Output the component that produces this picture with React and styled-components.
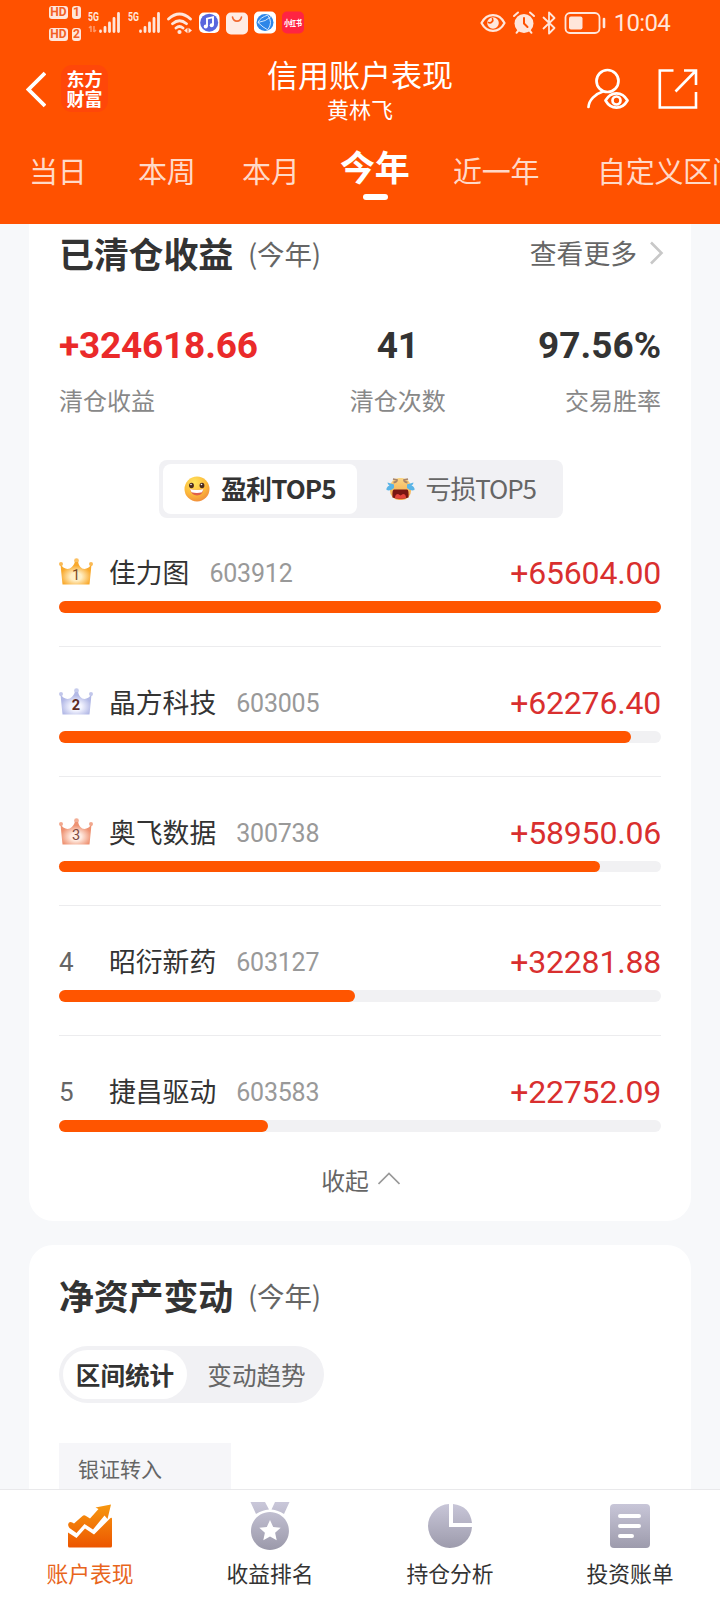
import React from 'react';
import styled, { createGlobalStyle } from 'styled-components';

const GlobalStyle = createGlobalStyle`
  * {
    box-sizing: border-box;
  }

  body {
    margin: 0;
    background: #f7f8fa;
    font-family: 'Noto Sans CJK SC', sans-serif;
    color: #333;
  }

  svg {
    display: block;
    flex: none;
  }
`;

const Screen = styled.div`
  display: flex;
  flex-direction: column;
  width: 720px;
  height: 1600px;
  overflow: hidden;
`;

const Header = styled.header`
  flex: none;
  height: 224px;
  background: #ff5100;
  color: #fff;
`;

const StatusBar = styled.div`
  display: flex;
  justify-content: space-between;
  height: 46px;
  padding: 0 50px 0 49px;
`;

const StatusGroup = styled.div`
  display: flex;
  align-items: center;
  gap: ${({ $gap }) => $gap}px;
`;

const HdList = styled.div`
  display: grid;
  gap: 9px;
  margin: 1px 2px 0 0;
`;

const HdRow = styled.div`
  display: flex;
  gap: 4px;
`;

const HdTag = styled.span`
  width: ${({ $width }) => $width}px;
  height: 13px;
  border-radius: 3px;
  background: #ffe6db;
  color: #f26024;
  font: bold 12px/13px Roboto, sans-serif;
  text-align: center;
`;

const Clock = styled.span`
  margin-left: 3px;
  font: 24px/46px Roboto, sans-serif;
  letter-spacing: -0.7px;
  color: #ffe6db;
`;

const TitleBar = styled.div`
  display: grid;
  grid-template-columns: 200px 1fr 200px;
  height: 86px;
`;

const TitleLeft = styled.div`
  display: flex;
  gap: 15px;
  padding: 19px 0 0 26px;
`;

const Logo = styled.div`
  display: grid;
  align-content: center;
  width: 47px;
  height: 47px;
  border-radius: 11px;
  background: #ff4709;
  font-size: 18px;
  font-weight: 700;
  line-height: 19.5px;
  text-align: center;
`;

const Heading = styled.div`
  text-align: center;
`;

const Title = styled.h1`
  margin: 6px 0 0;
  font-size: 31px;
  font-weight: 400;
  line-height: 44px;
`;

const Subtitle = styled.div`
  font-size: 22px;
  line-height: 24px;
`;

const TitleRight = styled.div`
  display: flex;
  justify-content: flex-end;
  gap: 29px;
  padding: 22px 22px 0 0;
`;

const Tabs = styled.nav`
  display: flex;
  height: 92px;
  padding: 11px 0 0 29px;
`;

const Tab = styled.div`
  flex: none;
  width: ${({ $width }) => $width}px;
  font-size: 29px;
  line-height: 55px;
  letter-spacing: -0.3px;
  white-space: nowrap;
  color: #ffd9c8;
`;

const ActiveTab = styled(Tab)`
  font-size: 35px;
  font-weight: 700;
  line-height: 46px;
  color: #fff;

  &::after {
    content: '';
    display: block;
    width: 25px;
    height: 6px;
    margin: 5px 0 0 23px;
    border-radius: 3px;
    background: #fff;
  }
`;

const Body = styled.main`
  flex: 1;
  min-height: 0;
  overflow: hidden;
  padding: 0 29px;
`;

const Card = styled.section`
  height: ${({ $height }) => $height}px;
  padding: 0 30px;
  background: #fff;
  border-radius: ${({ $radius }) => $radius};

  & + & {
    margin-top: 24px;
    padding-top: 21px;
  }
`;

const CardHeader = styled.div`
  display: flex;
  align-items: center;
  height: 57px;
`;

const CardTitle = styled.h2`
  margin: 0;
  font-size: 35px;
  font-weight: 700;
  line-height: 56px;
  letter-spacing: -0.2px;
`;

const Period = styled.span`
  margin-left: 15px;
  font-size: 27.5px;
  letter-spacing: -0.2px;
  line-height: 56px;
  color: #666;
`;

const More = styled.span`
  display: flex;
  align-items: center;
  gap: 12px;
  margin: 0 -3px 0 auto;
  font-size: 26.8px;
  line-height: 56px;
  color: #666;
`;

const Stats = styled.div`
  display: flex;
  justify-content: space-between;
  height: 179px;
  padding-top: 43px;
`;

const Stat = styled.div`
  text-align: ${({ $align }) => $align};
`;

const StatValue = styled.div`
  font: bold 37px/44px Roboto, sans-serif;
  letter-spacing: ${({ $spacing }) => $spacing || 0}px;
  color: ${({ $color }) => $color || '#333'};
`;

const StatLabel = styled.div`
  margin-top: 14px;
  font-size: 24px;
  line-height: 36px;
  color: #888;
`;

const Toggle = styled.div`
  display: flex;
  width: 404px;
  height: 58px;
  margin-left: 100px;
  padding: 4px;
  border-radius: 8px;
  background: #f1f1f4;
`;

const ToggleItem = styled.div`
  display: flex;
  align-items: center;
  gap: 11px;
  width: ${({ $width }) => $width}px;
  padding-left: ${({ $inset }) => $inset}px;
  border-radius: 8px;
  background: ${({ $active }) => ($active ? '#fff' : 'none')};
  color: ${({ $active }) => ($active ? '#333' : '#666')};
  font-size: 26px;
  font-weight: ${({ $active }) => ($active ? 700 : 400)};
  line-height: 46px;
  letter-spacing: ${({ $active }) => ($active ? -0.9 : -1.1)}px;
  white-space: nowrap;

  span {
    margin-top: -2px;
  }
`;

const Ranking = styled.ol`
  margin: 0;
  padding: 0;
  list-style: none;
`;

const RankItem = styled.li`
  height: 129.7px;
  padding-top: 35px;
  border-bottom: 1px solid #ececee;

  &:first-child {
    height: 129.1px;
    padding-top: 34px;
  }

  &:last-child {
    border-bottom: 0;
  }
`;

const RankRow = styled.div`
  display: flex;
  align-items: center;
  height: 42px;
`;

const RankBadge = styled.div`
  width: 50px;
  color: #666;
  font: 26px/42px Roboto, sans-serif;
`;

const StockName = styled.span`
  font-size: 26.8px;
  line-height: 42px;
  margin-top: -2px;
`;

const StockCode = styled.span`
  margin: 2px 0 0 20px;
  font: 25px/42px Roboto, sans-serif;
  letter-spacing: -0.2px;
  color: #999;
`;

const Amount = styled.span`
  margin-left: auto;
  font: 32px/42px Roboto, sans-serif;
  letter-spacing: -0.2px;
  color: #d92f2f;
`;

const Track = styled.div`
  height: 11.5px;
  margin-top: 7px;
  border-radius: 6px;
  background: #f1f1f3;
`;

const Fill = styled.div`
  height: 100%;
  border-radius: 6px;
  background: #ff5500;
`;

const Collapse = styled.div`
  display: flex;
  justify-content: center;
  gap: 9px;
  margin-top: -4px;
  padding-left: 1px;
  font-size: 23.8px;
  line-height: 36px;
  color: #666;

  svg {
    margin-top: 10px;
  }
`;

const Segments = styled.div`
  display: flex;
  width: 265px;
  height: 57px;
  margin-top: 23px;
  padding: 4px;
  border-radius: 29px;
  background: #f1f1f4;
`;

const Segment = styled.div`
  flex: none;
  width: ${({ $width }) => $width}px;
  border-radius: 25px;
  background: ${({ $active }) => ($active ? '#fff' : 'none')};
  color: ${({ $active }) => ($active ? '#333' : '#666')};
  font-size: 24.6px;
  font-weight: ${({ $active }) => ($active ? 700 : 400)};
  line-height: 48px;
  text-align: center;
`;

const TableHead = styled.div`
  width: 172px;
  height: 60px;
  margin-top: 40px;
  padding-left: 19px;
  background: #f6f6f9;
  color: #666;
  font-size: 21px;
  line-height: 50px;
`;

const BottomNav = styled.nav`
  flex: none;
  display: flex;
  height: 111px;
  border-top: 1px solid #e9e9eb;
  background: #fff;
`;

const NavItem = styled.div`
  display: flex;
  flex-direction: column;
  align-items: center;
  width: 180px;
  padding-top: 11px;
  color: ${({ $active }) => ($active ? '#e8651c' : '#333')};
  font-size: 21.8px;
  line-height: 32px;

  svg {
    margin-bottom: 6px;
  }
`;

const pale = '#ffe6db';

function Signal({ data }) {
  return (
    <svg width="34" height="24" viewBox="0 0 34 24">
      <text x="0" y="10" fontFamily="Roboto" fontSize="12" fontWeight="700" textLength="11" lengthAdjust="spacingAndGlyphs" fill={pale}>5G</text>
      {data && (
        <path d="M3 15v6M1 17l2-2M6 15v6M6 21l2-2" stroke="#ff9a6c" strokeWidth="1.5" fill="none" />
      )}
      <path d="M12.500 20v.5M17 16.500v4M21.500 12v8.500M26 7.500v13M30.500 2.500v18" stroke={pale} strokeWidth="2.8" strokeLinecap="round" />
    </svg>
  );
}

function Wifi() {
  return (
    <svg width="26" height="24" viewBox="0 0 26 24" fill="none" stroke={pale} strokeWidth="2.8" strokeLinecap="round">
      <path d="M1.500 8Q12.500 -2 23.500 8M5.500 12.700q7-6 14 0M9 17q3.500-3 7 0" />
      <circle cx="12.500" cy="21" r="1.300" fill={pale} stroke="none" />
      <circle cx="12.500" cy="21" r="0.700" />
      <path d="M17 19.500l3.500-2.800v5.600zM21.500 16.700l3.500 2.800-3.500 2.800z" fill={pale} stroke="none" />
    </svg>
  );
}

function AppBadges() {
  return (
    <svg width="107" height="24" viewBox="0 0 107 24">
      <rect x="0" y="1.500" width="20.500" height="20.500" rx="5" fill="#fff" />
      <circle cx="10.200" cy="11.700" r="9" fill="#5966dd" />
      <path d="M8 15.500V7.700l6-1.500V14" fill="none" stroke="#fff" strokeWidth="1.900" />
      <circle cx="6.700" cy="15.500" r="2" fill="#fff" />
      <circle cx="12.700" cy="14.300" r="2" fill="#fff" />
      <rect x="27" y="1.500" width="22" height="22" rx="5" fill="#ffece4" />
      <path d="M33.500 6c1 5.500 8 5.500 9 0" fill="none" stroke="#f26a32" strokeWidth="1.600" strokeLinecap="round" />
      <rect x="55" y="0.500" width="22" height="22" rx="5" fill="#fff" />
      <circle cx="66" cy="11.500" r="8.500" fill="#2d86e8" />
      <path d="M69 4Q61 6.500 59 11.500q5 5 10 7.500M59 11.500q8-1 13-6M69 4.500q5 7 0 14" fill="none" stroke="#cfe6ff" strokeWidth="1" />
      <rect x="83" y="0.500" width="22" height="22" rx="5" fill="#ff2442" />
      <text x="94" y="14.500" textAnchor="middle" fontFamily="Noto Sans CJK SC" fontWeight="900" fontSize="7.500" fill="#fff" textLength="18" lengthAdjust="spacingAndGlyphs">小红书</text>
    </svg>
  );
}

function SystemIcons() {
  return (
    <svg width="126" height="24" viewBox="0 0 126 24" fill="none" stroke={pale} strokeLinecap="round" strokeLinejoin="round">
      <path d="M1.500 12C7 1.500 19 1.500 24.500 12C19 22.500 7 22.500 1.500 12z" strokeWidth="2.200" />
      <circle cx="13" cy="12" r="5.800" fill={pale} stroke="none" />
      <path d="M12.500 7.500a3 3 0 0 1 -4 4" stroke="#ff5100" strokeWidth="1.600" />
      <circle cx="44" cy="12.500" r="9.500" fill={pale} stroke="none" />
      <path d="M34 5l4-3.500M54 5l-4-3.500M38 20l-1.500 1.800M50 20l1.500 1.800" strokeWidth="2" />
      <path d="M44 7v5.500l3.500 3.500" stroke="#ff5100" strokeWidth="2" />
      <path d="M63.500 6.500l11 10.500-5.500 5.500V1.500l5.500 5.500-11 10.500" strokeWidth="1.800" />
      <rect x="85.500" y="2" width="34" height="20" rx="4.500" strokeWidth="1.800" />
      <rect x="89" y="5.500" width="13.500" height="13" rx="2" fill={pale} stroke="none" />
      <path d="M124 8v8" strokeWidth="2.600" />
    </svg>
  );
}

function UserEye() {
  return (
    <svg width="42" height="42" viewBox="0 0 42 42" fill="none" stroke="#fff" strokeWidth="2.700" strokeLinecap="round">
      <circle cx="20.500" cy="13" r="11" />
      <path d="M16 23.500C8 26 2 32 1.500 39" />
      <path d="M18.500 32.500C24 23 35 23 40.500 32.500C35 42 24 42 18.500 32.500z" strokeLinejoin="round" />
      <circle cx="29.500" cy="32.500" r="4" />
    </svg>
  );
}

function Share() {
  return (
    <svg width="40" height="42" viewBox="0 0 40 42" fill="none" stroke="#fff" strokeWidth="2.600">
      <path d="M15.500 2.500H1.800v37H38V24" />
      <path d="M26 2.500h12V17M38 2.500L17.500 23.500" />
    </svg>
  );
}

function Smile() {
  return (
    <svg width="26" height="26" viewBox="0 0 26 26">
      <defs>
        <radialGradient id="smile" cx="0.4" cy="0.25" r="0.8">
          <stop offset="0" stopColor="#ffe65e" />
          <stop offset="0.6" stopColor="#fcb93a" />
          <stop offset="1" stopColor="#f08a3c" />
        </radialGradient>
      </defs>
      <circle cx="13" cy="13" r="12.500" fill="url(#smile)" />
      <ellipse cx="7.500" cy="9.500" rx="2.400" ry="2.800" fill="#4a2a1c" />
      <ellipse cx="18" cy="9.500" rx="2.400" ry="2.800" fill="#4a2a1c" />
      <circle cx="7" cy="8.500" r="0.800" fill="#fff" />
      <circle cx="17.500" cy="8.500" r="0.800" fill="#fff" />
      <path d="M6 13q7 2 13.500 0q-1 6.500-6.500 6.500t-7-6.500z" fill="#e0604a" />
      <path d="M6 13q7 2 13.500 0l-1.500 3.200q-5 1.500-10.500 0z" fill="#fff" />
    </svg>
  );
}

function Cry() {
  return (
    <svg width="29" height="24" viewBox="0 0 29 24">
      <defs>
        <linearGradient id="cry" x2="0" y2="1">
          <stop offset="0" stopColor="#fbd583" />
          <stop offset="1" stopColor="#f5a644" />
        </linearGradient>
      </defs>
      <rect x="4" y="1" width="21" height="22" rx="9" fill="url(#cry)" />
      <path d="M7 2l4 1q0 2-3.500 2.500M22 2l-4 1q0 2 3.500 2.500" fill="none" stroke="#a98468" strokeWidth="1.800" />
      <path d="M8 7.500L1.500 5.500q0 2 2 3Q0 10 0.500 13q4 1.500 7.500-2zM21 7.500l6.500-2q0 2-2 3 3.500 1.500 3 4.500-4 1.500-7.500-2z" fill="#5ab4e6" />
      <path d="M6.500 20.500q-.500-8 1.500-8h13q2 0 1.500 8-8 2.500-16 0z" fill="#7a1712" />
      <path d="M9 21q0-4 3-4l2.500 1.500 2.500-1.500q3 0 3 4-5.500 1.500-11 0z" fill="#e4453b" />
    </svg>
  );
}

function Crown({ rank, edge, middle, digit }) {
  const id = `crown${rank}`;
  return (
    <svg width="34" height="30" viewBox="0 0 34 30">
      <defs>
        <radialGradient id={id} cx="0.5" cy="0.65" r="0.5">
          <stop offset="0" stopColor={middle} />
          <stop offset="0.35" stopColor={middle} />
          <stop offset="1" stopColor={edge} />
        </radialGradient>
      </defs>
      <path d="M1.500 6.500Q4.500 10.500 8.500 11Q13.500 10.500 16 4h3Q20.500 10.500 25.500 11Q29.500 10.500 32.500 6.500L30.500 26.500h-27z" fill={`url(#${id})`} />
      <circle cx="2" cy="6" r="2" fill={edge} fillOpacity="0.800" />
      <circle cx="17.500" cy="2.700" r="2.400" fill={edge} fillOpacity="0.750" />
      <circle cx="32" cy="6" r="2" fill={edge} fillOpacity="0.800" />
      <text x="17" y="21.500" textAnchor="middle" fontFamily="Roboto" fontSize="14.500" fontWeight={rank === 2 ? 700 : 400} fill={digit}>{rank}</text>
    </svg>
  );
}

function NavIcon({ name }) {
  return (
    <svg width="48" height="50" viewBox="0 0 48 50">
      <defs>
        <linearGradient id={`nav-${name}`} gradientUnits="userSpaceOnUse" x1="0" y1="2" x2="0" y2="48">
          <stop offset="0" stopColor={name === 'chart' ? '#f79a10' : '#c9c7d9'} />
          <stop offset="1" stopColor={name === 'chart' ? '#ec5300' : '#9c9aab'} />
        </linearGradient>
      </defs>
      <g fill={`url(#nav-${name})`}>
        {name === 'chart' && (
          <>
            <path d="M2 31.500l8.500 5.500 8.500-9.500 9 6L44.500 17q1.500-1 1.500 1v27q0 1.500-1.500 1.500H3.500Q2 46.500 2 45z" />
            <path d="M3 21.500q2-1.500 5 1L16.500 15q1.500-1.300 3.500 0l4 2.500 8.500-9.500-3-1.500L45 3.500 41.500 18l-3-3.500-11.500 14-8.500-5.500-8 9L3.500 27Q1 24 3 21.500z" />
          </>
        )}
        {name === 'medal' && (
          <>
            <path d="M4.500 1h14.500l4 7.500Q16 9 10 13zM29 1h14.500l-5.500 12Q32 9 25.500 8.500z" />
            <path fillRule="evenodd" d="M24 11a19 19 0 1 1-.1 0zM24 19l-3.200 7-7.500.8 5.600 5-1.600 7.500 6.700-3.800 6.700 3.800-1.600-7.500 5.600-5-7.500-.8z" />
          </>
        )}
        {name === 'pie' && (
          <>
            <path d="M23 3v23h23A22 22 0 1 1 23 3z" />
            <path d="M27 3q17 2 19 19H27z" />
          </>
        )}
        {name === 'bill' && <rect x="4" y="3" width="40" height="44" rx="4" />}
      </g>
      {name === 'bill' && (
        <path d="M14 15h19M14 25h19M14 35h12" stroke="#fff" strokeWidth="4" strokeLinecap="round" />
      )}
    </svg>
  );
}

const stocks = [
  { name: '佳力图', code: '603912', amount: '+65604.00', percent: 100 },
  { name: '晶方科技', code: '603005', amount: '+62276.40', percent: 95 },
  { name: '奥飞数据', code: '300738', amount: '+58950.06', percent: 89.9 },
  { name: '昭衍新药', code: '603127', amount: '+32281.88', percent: 49.2 },
  { name: '捷昌驱动', code: '603583', amount: '+22752.09', percent: 34.7 }
];

const crowns = [
  { edge: '#f9a92c', middle: '#ffefc6', digit: '#7a4a1e' },
  { edge: '#b3b9e6', middle: '#f4f5ff', digit: '#5d2a24' },
  { edge: '#ee9272', middle: '#ffebe1', digit: '#7d4a42' }
];

const navItems = [
  { icon: 'chart', label: '账户表现' },
  { icon: 'medal', label: '收益排名' },
  { icon: 'pie', label: '持仓分析' },
  { icon: 'bill', label: '投资账单' }
];

function App() {
  return (
    <Screen>
      <GlobalStyle />
      <Header>
        <StatusBar>
          <StatusGroup $gap={5.4}>
            <HdList>
              {[1, 2].map(sim => (
                <HdRow key={sim}>
                  <HdTag $width={19}>HD</HdTag>
                  <HdTag $width={9}>{sim}</HdTag>
                </HdRow>
              ))}
            </HdList>
            <Signal data />
            <Signal />
            <Wifi />
            <AppBadges />
          </StatusGroup>
          <StatusGroup $gap={5}>
            <SystemIcons />
            <Clock>10:04</Clock>
          </StatusGroup>
        </StatusBar>
        <TitleBar>
          <TitleLeft>
            <svg width="20" height="47" viewBox="0 0 20 47" fill="none" stroke="#fff" strokeWidth="3.800">
              <path d="M19 8L2.500 24.500 19 41" />
            </svg>
            <Logo>
              <span>东方</span>
              <span>财富</span>
            </Logo>
          </TitleLeft>
          <Heading>
            <Title>信用账户表现</Title>
            <Subtitle>黄林飞</Subtitle>
          </Heading>
          <TitleRight>
            <UserEye />
            <Share />
          </TitleRight>
        </TitleBar>
        <Tabs>
          <Tab $width={109}>当日</Tab>
          <Tab $width={104}>本周</Tab>
          <Tab $width={98}>本月</Tab>
          <ActiveTab $width={113}>今年</ActiveTab>
          <Tab $width={144}>近一年</Tab>
          <Tab $width={145}>自定义区间</Tab>
        </Tabs>
      </Header>

      <Body>
        <Card $height={997} $radius="0 0 24px 24px">
          <CardHeader>
            <CardTitle>已清仓收益</CardTitle>
            <Period>(今年)</Period>
            <More>
              查看更多
              <svg width="15" height="24" viewBox="0 0 15 24" fill="none" stroke="#c8c8c8" strokeWidth="2.600">
                <path d="M2 1.500L12.500 12 2 22.500" />
              </svg>
            </More>
          </CardHeader>
          <Stats>
            <Stat $align="left">
              <StatValue $color="#ea2a2a" $spacing={-0.2}>+324618.66</StatValue>
              <StatLabel>清仓收益</StatLabel>
            </Stat>
            <Stat $align="center">
              <StatValue>41</StatValue>
              <StatLabel>清仓次数</StatLabel>
            </Stat>
            <Stat $align="right">
              <StatValue>97.56%</StatValue>
              <StatLabel>交易胜率</StatLabel>
            </Stat>
          </Stats>
          <Toggle>
            <ToggleItem $active $width={194} $inset={21}>
              <Smile />
              <span>盈利TOP5</span>
            </ToggleItem>
            <ToggleItem $width={202} $inset={28.5}>
              <Cry />
              <span>亏损TOP5</span>
            </ToggleItem>
          </Toggle>
          <Ranking>
            {stocks.map((stock, index) => (
              <RankItem key={stock.code}>
                <RankRow>
                  <RankBadge>
                    {crowns[index] ? <Crown rank={index + 1} {...crowns[index]} /> : index + 1}
                  </RankBadge>
                  <StockName>{stock.name}</StockName>
                  <StockCode>{stock.code}</StockCode>
                  <Amount>{stock.amount}</Amount>
                </RankRow>
                <Track>
                  <Fill style={{ width: `${stock.percent}%` }} />
                </Track>
              </RankItem>
            ))}
          </Ranking>
          <Collapse>
            收起
            <svg width="22" height="13" viewBox="0 0 22 13" fill="none" stroke="#999" strokeWidth="1.700">
              <path d="M0.500 12L11 1.500 21.500 12" />
            </svg>
          </Collapse>
        </Card>

        <Card $height={400} $radius="24px">
          <CardHeader>
            <CardTitle>净资产变动</CardTitle>
            <Period>(今年)</Period>
          </CardHeader>
          <Segments>
            <Segment $active $width={124}>区间统计</Segment>
            <Segment $width={139}>变动趋势</Segment>
          </Segments>
          <TableHead>银证转入</TableHead>
        </Card>
      </Body>

      <BottomNav>
        {navItems.map((item, index) => (
          <NavItem key={item.icon} $active={index === 0}>
            <NavIcon name={item.icon} />
            {item.label}
          </NavItem>
        ))}
      </BottomNav>
    </Screen>
  );
}

export default App;
